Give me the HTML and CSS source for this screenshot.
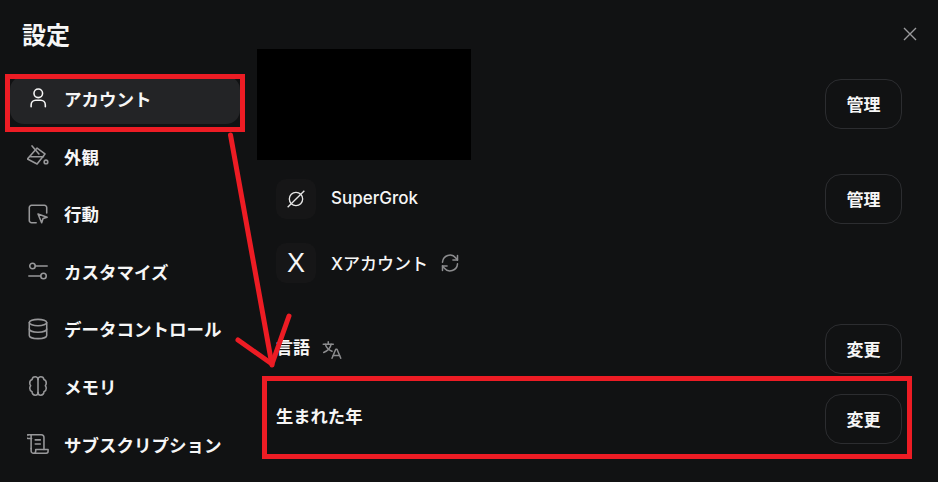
FILE: index.html
```html
<!DOCTYPE html>
<html lang="ja">
<head>
    <meta charset="UTF-8">
    <title>設定</title>
    <link rel="stylesheet" href="styles.css">
</head>
<body>
    <div class="dialog">
        <!-- Sidebar -->
        <aside class="sidebar">
            <h1 class="title">設定</h1>
            <nav class="nav">
                <a class="nav-item active">
                    <svg class="nav-icon" viewBox="0 0 24 24"><circle cx="12.300" cy="6.900" r="4.700"/><path d="M4.500 21.500v-2a5 5 0 0 1 5-5h5.500a5 5 0 0 1 5 5v2"/></svg>
                    アカウント
                </a>
                <a class="nav-item">
                    <svg class="nav-icon" viewBox="0 0 24 24"><path d="M5.500 1L13 9.800"/><path d="M.500 15.300L11 3.300l8.600 6.500L11 20.700z"/><path d="M4 12.800h14"/><circle cx="20.700" cy="18.500" r="2"/></svg>
                    外観
                </a>
                <a class="nav-item">
                    <svg class="nav-icon" viewBox="0 0 24 24"><path d="M10 21.500H5A2.500 2.500 0 0 1 2.500 19V5A2.500 2.500 0 0 1 5 2.500h14A2.500 2.500 0 0 1 21.500 5v6"/><path d="M12 12l10 3.500-4.500 1.500-1.500 4.500z"/></svg>
                    行動
                </a>
                <a class="nav-item">
                    <svg class="nav-icon" viewBox="0 0 24 24"><circle cx="6" cy="6.500" r="3"/><path d="M9 6.500h13"/><circle cx="18" cy="17.500" r="3"/><path d="M2 17.500h13"/></svg>
                    カスタマイズ
                </a>
                <a class="nav-item">
                    <svg class="nav-icon" viewBox="0 0 24 24"><ellipse cx="12" cy="5" rx="9.500" ry="3.500"/><path d="M2.500 5v14c0 2 4.300 3.500 9.500 3.500s9.500-1.500 9.500-3.500V5"/><path d="M2.500 12c0 2 4.300 3.500 9.500 3.500s9.500-1.500 9.500-3.500"/></svg>
                    データコントロール
                </a>
                <a class="nav-item">
                    <svg class="nav-icon" viewBox="0 0 24 24"><path d="M12 3v18"/><path d="M12 5a3 3 0 0 0-3-3 3.500 3.500 0 0 0-3.500 3A4 4 0 0 0 3 9c0 1 .4 2 1 2.800A4 4 0 0 0 3 14.500a4 4 0 0 0 2.500 3.700A3.500 3.500 0 0 0 9 22a3 3 0 0 0 3-3"/><path d="M12 5a3 3 0 0 1 3-3 3.500 3.500 0 0 1 3.500 3A4 4 0 0 1 21 9c0 1-.4 2-1 2.800a4 4 0 0 1 1 2.700 4 4 0 0 1-2.500 3.700A3.500 3.500 0 0 1 15 22a3 3 0 0 1-3-3"/></svg>
                    メモリ
                </a>
                <a class="nav-item">
                    <svg class="nav-icon" viewBox="0 0 24 24"><path d="M1.500 2h14a3 3 0 0 1 3 3v13"/><path d="M1.500 2a2 2 0 0 0-.500 4h4"/><path d="M4.500 2.500V17"/><path d="M9 7.500h5.500M9 12h5.500"/><path d="M8 22h13a2 2 0 0 0 2-2v-2H9.500v1.500A2.500 2.500 0 0 1 7 22a2.500 2.500 0 0 1-2.500-2.500V17"/></svg>
                    サブスクリプション
                </a>
            </nav>
        </aside>

        <!-- Account settings -->
        <main class="content">
            <div class="row row-profile">
                <div class="redacted"></div>
                <button class="btn">管理</button>
            </div>
            <div class="row row-plan">
                <div class="label-group">
                    <span class="icon-box">
                        <svg class="grok-icon" viewBox="0 0 24 24"><circle cx="12" cy="12" r="8"/><path d="M2 22L22 2"/></svg>
                    </span>
                    <span class="label">SuperGrok</span>
                </div>
                <button class="btn">管理</button>
            </div>
            <div class="row row-x">
                <div class="label-group">
                    <span class="icon-box x-mark">X</span>
                    <span class="label">Xアカウント</span>
                    <svg class="small-icon" viewBox="0 0 24 24"><path d="M3 11a9 9 0 0 1 16-5l2 2.500"/><path d="M21 3v5.500h-5.500"/><path d="M21 13a9 9 0 0 1-16 5l-2-2.500"/><path d="M3 21v-5.500h5.500"/></svg>
                </div>
            </div>
            <div class="row row-lang">
                <div class="label-group">
                    <span class="label">言語</span>
                    <svg class="small-icon lang-icon" viewBox="0 0 24 24"><path d="M1.500 5h12"/><path d="M7.500 2v3"/><path d="M11 5c-.8 4.500-4 8-9 10"/><path d="M4 5c1 4 4 7 8 8.500"/><path d="M12 22l4.500-11h1.500l4.500 11"/><path d="M13.500 18.500h7.500"/></svg>
                </div>
                <button class="btn">変更</button>
            </div>
            <div class="row row-birth">
                <span class="label">生まれた年</span>
                <button class="btn">変更</button>
            </div>
        </main>

        <button class="close" aria-label="閉じる">
            <svg viewBox="0 0 14 14"><path d="M1 1l12 12M13 1L1 13"/></svg>
        </button>
    </div>

    <!-- Red markup drawn over the screenshot -->
    <svg class="markup" viewBox="0 0 938 482">
        <rect x="7.500" y="76.500" width="235" height="53"/>
        <rect x="264.500" y="378.500" width="645" height="78"/>
        <path d="M230.500 135L272 365"/>
        <path d="M238 340L272 364L289 316"/>
    </svg>
</body>
</html>
```

FILE: styles.css
```css
* {
    box-sizing: border-box;
}

body {
    margin: 0;
    width: 938px;
    height: 482px;
    overflow: hidden;
    background-color: #111213;
    color: #f6f6f6;
    font-family: Inter, "Noto Sans CJK JP", sans-serif;
}

.dialog {
    display: flex;
    height: 100%;
}

/* Sidebar */
.sidebar {
    width: 257px;
    flex-shrink: 0;
    padding: 0 17px 0 10px;
}

.title {
    margin: 19px 0 0 12px;
    font-size: 24px;
    line-height: 34px;
    font-weight: 700;
}

.nav {
    display: flex;
    flex-direction: column;
    gap: 9.600px;
    margin-top: 23px;
}

.nav-item {
    display: flex;
    align-items: center;
    gap: 15px;
    height: 48px;
    padding: 0 0 3px 17px;
    border-radius: 14px;
    font-size: 17.500px;
    font-weight: 600;
    white-space: nowrap;
}

.nav-item.active {
    background-color: #232426;
    padding-bottom: 4px;
}

.nav-icon {
    width: 22px;
    height: 22px;
    flex-shrink: 0;
    fill: none;
    stroke: #98989a;
    stroke-width: 1.700;
    stroke-linecap: round;
    stroke-linejoin: round;
}

.active .nav-icon {
    stroke: #f6f6f6;
}

/* Main column */
.content {
    flex: 1;
    display: flex;
    flex-direction: column;
    padding: 49px 36px 0 0;
}

.row {
    display: flex;
    align-items: center;
    justify-content: space-between;
}

.row-profile {
    height: 111px;
    align-items: flex-start;
}

.row-profile .btn {
    margin-top: 30px;
}

.row-plan {
    height: 50px;
    margin: 14px 0 0 19px;
}

.row-x {
    height: 50px;
    margin: 14px 0 0 19px;
}

.row-lang {
    height: 50px;
    margin: 36px 0 0 19px;
}

.row-birth {
    height: 50px;
    margin: 20px 0 0 19px;
}

.row-lang .label {
    margin-top: -6px;
    font-weight: 600;
}

.row-birth .label {
    margin-top: -7px;
    font-size: 17.300px;
    font-weight: 600;
}

.redacted {
    width: 214px;
    height: 111px;
    background-color: #000;
}

.label-group {
    display: flex;
    align-items: center;
}

.icon-box {
    display: flex;
    align-items: center;
    justify-content: center;
    width: 40px;
    height: 40px;
    margin-right: 15px;
    border-radius: 10px;
    background-color: #161617;
}

.x-mark {
    font-family: "Liberation Sans", sans-serif;
    font-size: 27px;
}

.grok-icon {
    width: 20px;
    height: 20px;
    fill: none;
    stroke: #e6e6e6;
    stroke-width: 1.600;
}

.label {
    font-size: 17px;
    font-weight: 500;
    white-space: nowrap;
    margin-top: -2px;
}

.small-icon {
    width: 20px;
    height: 20px;
    margin-left: 12px;
    fill: none;
    stroke: #8c8c8e;
    stroke-width: 1.800;
    stroke-linecap: round;
    stroke-linejoin: round;
}

.lang-icon {
    margin-top: 2px;
}

.btn {
    width: 77px;
    height: 50px;
    padding: 0 0 2px;
    border: 1px solid #2c2d30;
    border-radius: 16px;
    background-color: transparent;
    color: #f6f6f6;
    font-family: inherit;
    font-size: 17px;
    font-weight: 600;
}

.close {
    position: absolute;
    top: 27px;
    left: 903px;
    width: 14px;
    height: 14px;
    padding: 0;
    border: none;
    background: none;
}

.close svg {
    display: block;
    fill: none;
    stroke: #9a9a9c;
    stroke-width: 1.400;
}

/* Annotations */
.markup {
    position: absolute;
    top: 0;
    left: 0;
    width: 938px;
    height: 482px;
    fill: none;
    stroke: #ed1c24;
    stroke-width: 5;
    stroke-linecap: round;
    stroke-linejoin: round;
}

.markup rect {
    stroke-linejoin: miter;
}
```
